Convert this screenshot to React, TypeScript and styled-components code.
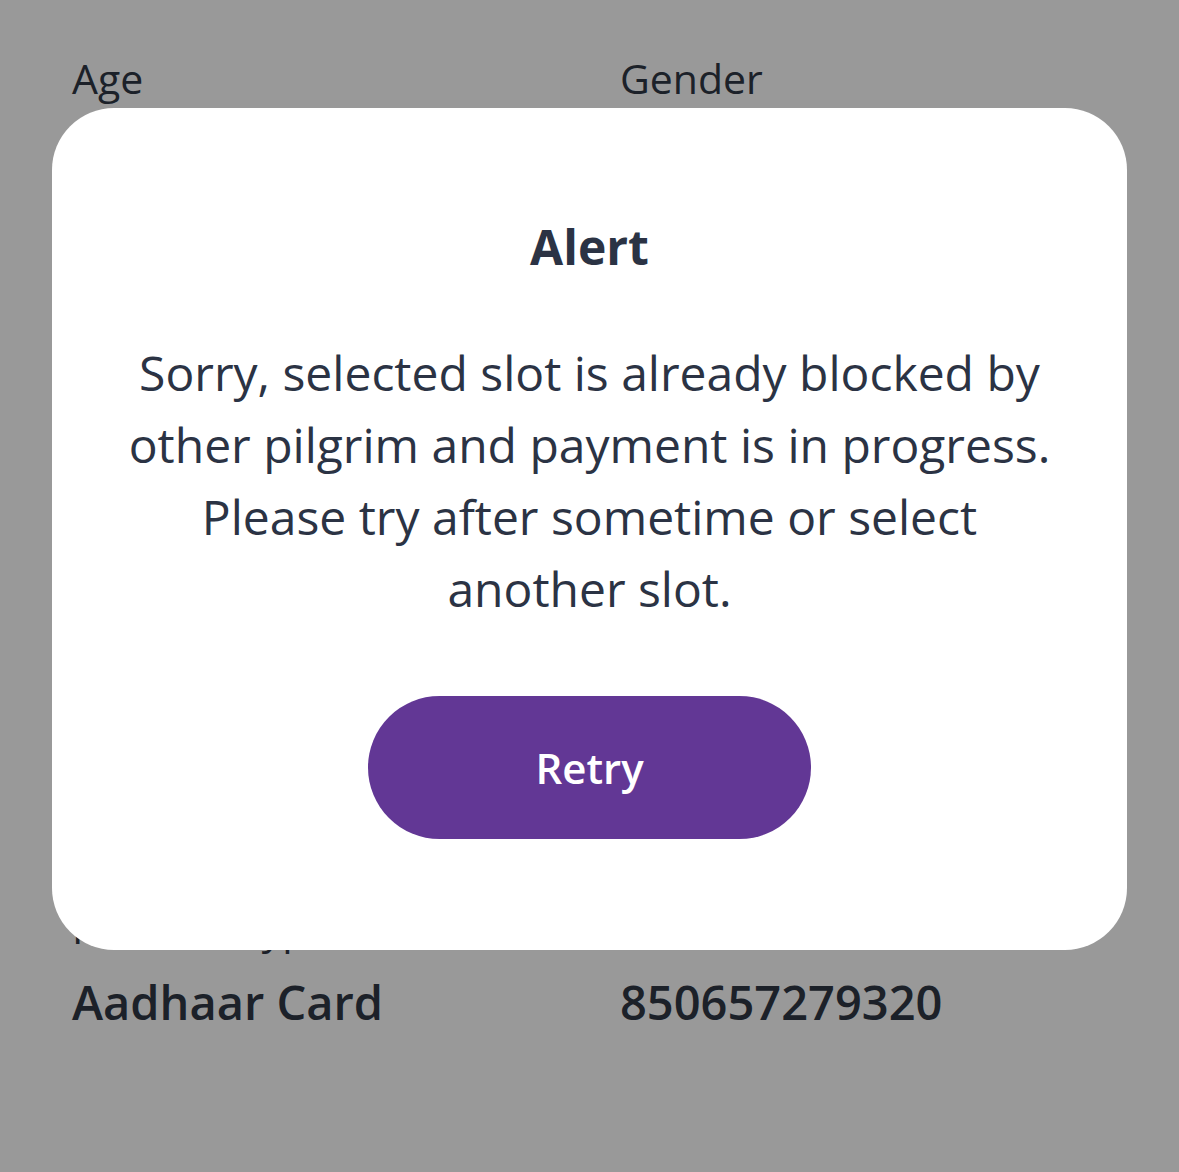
import React from 'react';
import styled, { createGlobalStyle } from 'styled-components';

const GlobalStyle = createGlobalStyle`
  html, body {
    margin: 0;
    padding: 0;
    background: #ffffff;
  }
  body {
    font-family: 'Open Sans', 'Noto Sans', Arial, sans-serif;
    color: #303745;
  }
`;

const Page = styled.div`
  position: relative;
  min-height: 1172px;
  padding: 50px 72px 0;
  box-sizing: border-box;
`;

const DetailGrid = styled.div`
  display: grid;
  grid-template-columns: 548px 1fr;
  row-gap: 36px;
`;

const Field = styled.div`
  display: flex;
  flex-direction: column;
  gap: 14px;
`;

const Label = styled.div`
  font-size: 41px;
  line-height: 56px;
  font-weight: 400;
`;

const Value = styled.div`
  font-size: 47px;
  line-height: 64px;
  font-weight: 600;
`;

const Overlay = styled.div`
  position: fixed;
  inset: 0;
  background: rgba(0, 0, 0, 0.4);
  display: flex;
  justify-content: center;
  align-items: flex-start;
  padding: 108px 52px 0;
`;

const Dialog = styled.div`
  flex: 1;
  background: #ffffff;
  border-radius: 62px;
  padding: 109px 40px 111px;
  display: flex;
  flex-direction: column;
  align-items: center;
  text-align: center;
  color: #2b3344;
`;

const Title = styled.h2`
  margin: 0;
  font-size: 48px;
  line-height: 60px;
  font-weight: 700;
`;

const Message = styled.p`
  margin: 60px 0 0;
  font-size: 48px;
  line-height: 72px;
  font-weight: 400;
`;

const RetryButton = styled.button`
  margin-top: 71px;
  width: 443px;
  height: 143px;
  border: none;
  border-radius: 72px;
  background: #623795;
  color: #ffffff;
  font-family: inherit;
  font-size: 42px;
  font-weight: 600;
  cursor: pointer;
`;

const fields: [string, string][] = [
  ['Age', '34'],
  ['Gender', 'Male'],
  ['Pilgrim Name', 'Ramesh Kumar'],
  ['Mobile Number', '9876543210'],
  ['Date of Birth', '12-05-1990'],
  ['State', 'Telangana'],
  ['Darshan Date', '24-08-2024'],
  ['Slot', '10:00 AM'],
  ['Nationality', 'Indian'],
  ['City', 'Hyderabad'],
  ['ID Proof Type', 'Aadhaar Card'],
  ['ID Proof Number', '850657279320'],
];

export default function App() {
  return (
    <>
      <GlobalStyle />
      <Page>
        <DetailGrid>
          {fields.map(([label, value]) => (
            <Field key={label}>
              <Label>{label}</Label>
              <Value>{value}</Value>
            </Field>
          ))}
        </DetailGrid>
      </Page>
      <Overlay>
        <Dialog role="alertdialog">
          <Title>Alert</Title>
          <Message>
            Sorry, selected slot is already blocked by
            <br />
            other pilgrim and payment is in progress.
            <br />
            Please try after sometime or select
            <br />
            another slot.
          </Message>
          <RetryButton>Retry</RetryButton>
        </Dialog>
      </Overlay>
    </>
  );
}
